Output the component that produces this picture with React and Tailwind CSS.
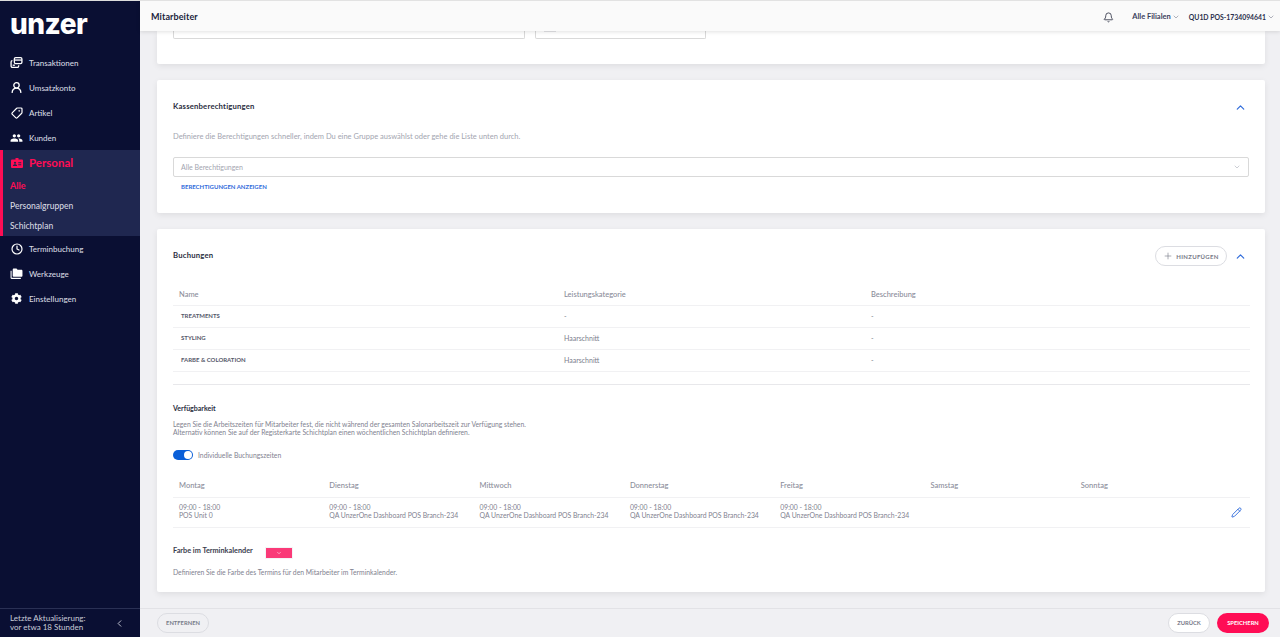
import { Bell, ChevronDown, ChevronLeft, ChevronUp, Clock, Pencil, Plus, Tag, UserRound } from "lucide-react";
import { MdFolderCopy, MdPeople } from "react-icons/md";
import { FaCog } from "react-icons/fa";

const TransactionsIcon = () => (
  <svg viewBox="0 0 24 24" className="w-[13px] h-[13px]" fill="none" stroke="currentColor" strokeWidth="2.4">
    <rect x="8" y="3" width="14" height="11" rx="2.5" />
    <path d="M8 7.5h14" />
    <path d="M4.5 8.5A2.5 2.5 0 0 0 2 11v7.5A2.5 2.5 0 0 0 4.5 21h9a2.5 2.5 0 0 0 2.5-2.5V17" />
    <path d="M5 17h4" />
  </svg>
);

// filled staff badge with clip on top
const BadgeIcon = () => (
  <svg viewBox="0 0 24 20" className="w-[12px] h-[10px]" fill="currentColor">
    <path d="M9 0h6v3h7a2 2 0 0 1 2 2v13a2 2 0 0 1-2 2H2a2 2 0 0 1-2-2V5a2 2 0 0 1 2-2h7z" />
    <circle cx="8" cy="9.5" r="2.2" fill="#1f2750" />
    <path d="M3.8 16c0-2.2 1.9-3.4 4.2-3.4s4.2 1.2 4.2 3.4z" fill="#1f2750" />
    <path d="M14.5 8.5h6v1.8h-6zM14.5 12.5h6v1.8h-6z" fill="#1f2750" />
  </svg>
);

const NavItem = ({ icon, label }) => (
  <div className="h-[25px] flex items-center pl-[10px] text-[#d5d7e0] text-[8px] font-medium">
    <span className="w-[13px] flex justify-center mr-[6px] text-white">{icon}</span>
    {label}
  </div>
);

const Sidebar = () => (
  <aside className="w-[140px] shrink-0 bg-[#0a0f33] flex flex-col border-t border-[#dddddd]">
    <div className="h-[49px] pl-[10px] pt-[7px] text-white text-[28px] leading-[32px] font-extrabold tracking-[-0.5px] font-['Inter',sans-serif]">
      unzer
    </div>
    <NavItem icon={<TransactionsIcon />} label="Transaktionen" />
    <NavItem icon={<UserRound size={13} strokeWidth={2.4} />} label="Umsatzkonto" />
    <NavItem icon={<Tag size={12} strokeWidth={2.4} className="rotate-90" />} label="Artikel" />
    <NavItem icon={<MdPeople size={14} />} label="Kunden" />
    <div className="bg-[#1f2750] border-l-[3px] border-[#ff0d55] h-[86px] flex flex-col">
      <div className="h-[26px] flex items-center pl-[7px] text-[#ff0d55] text-[11.5px] font-bold">
        <span className="w-[13px] flex justify-center mr-[6px]"><BadgeIcon /></span>
        Personal
      </div>
      <div className="h-[20px] flex items-center pl-[7px] text-[#ff0d55] text-[9px] font-bold">Alle</div>
      <div className="h-[20px] flex items-center pl-[7px] text-[#d5d7e0] text-[8.5px] font-medium">Personalgruppen</div>
      <div className="h-[20px] flex items-center pl-[7px] text-[#d5d7e0] text-[8.5px] font-medium">Schichtplan</div>
    </div>
    <NavItem icon={<Clock size={12} strokeWidth={2.4} />} label="Terminbuchung" />
    <NavItem icon={<MdFolderCopy size={14} />} label="Werkzeuge" />
    <NavItem icon={<FaCog size={11} />} label="Einstellungen" />
    <div className="mt-auto h-[29px] border-t border-[#2a3054] flex items-center justify-between pl-[10px] pr-[15px] text-[#c9ccd8] text-[8px] leading-[9px]">
      <div>
        Letzte Aktualisierung:
        <br />
        vor etwa 18 Stunden
      </div>
      <ChevronLeft size={11} />
    </div>
  </aside>
);

const Header = () => (
  <header className="relative z-10 h-[31px] shrink-0 bg-[#fafafa] border-t border-[#e2e2e2] shadow-[0_1px_4px_rgba(0,0,0,0.12)] flex items-center pt-[2px] pl-[11px] pr-[5px] text-[#1a1f3d]">
    <div className="text-[9px] font-bold tracking-[0.1px]">Mitarbeiter</div>
    <Bell size={11} className="ml-auto text-[#3d4152]" />
    <div className="ml-[18px] text-[7.5px] font-bold text-[#3a3f5c]">Alle Filialen</div>
    <ChevronDown size={8} className="ml-[1px] text-[#8a8d9c]" />
    <div className="ml-[9px] text-[6.85px] font-bold text-[#2a2f4c]">QU1D POS-1734094641</div>
    <ChevronDown size={8} className="ml-[1px] text-[#8a8d9c]" />
  </header>
);

const BookingRow = ({ name, category }) => (
  <div className="h-[22px] grid grid-cols-[383px_307px_1fr] items-center border-b border-[#f1f1f3] pl-[8px]">
    <div className="mb-[2px] text-[6px] font-bold text-[#55586a]">{name}</div>
    <div className="text-[7px] text-[#7a7d8c]">{category}</div>
    <div className="text-[7px] text-[#7a7d8c]">-</div>
  </div>
);

const days = ["Montag", "Dienstag", "Mittwoch", "Donnerstag", "Freitag", "Samstag", "Sonntag"];
const branch = "QA UnzerOne Dashboard POS Branch-234";

const Main = () => (
  <main className="flex-1 min-h-0 overflow-hidden bg-[#f0f0f3] pl-[17px] pr-[15px]">
    <section className="h-[33px] bg-white rounded-b-[2px] shadow-[0_2px_6px_rgba(0,0,0,0.08)] px-[16px]">
      <div className="flex gap-[10px]">
        <div className="w-[352px] h-[8px] border border-t-0 border-[#d9d9d9] rounded-b-[2px]" />
        <div className="w-[171px] h-[8px] border border-t-0 border-[#d9d9d9] rounded-b-[2px] pl-[8px]">
          <div className="w-[12px] h-[1px] bg-[#e2e2e6]" />
        </div>
      </div>
    </section>

    <section className="mt-[16px] h-[133px] bg-white rounded-[2px] shadow-[0_2px_6px_rgba(0,0,0,0.08)] px-[16px] pt-[21px]">
      <div className="flex items-center justify-between h-[12px]">
        <h2 className="text-[7.7px] font-bold tracking-[0.2px] text-[#2a2d3e]">Kassenberechtigungen</h2>
        <ChevronUp size={13} strokeWidth={2.2} className="text-[#2f6bdb] mr-[2px]" />
      </div>
      <p className="mt-[19px] text-[7.5px] leading-[10px] text-[#a3a5b0]">
        Definiere die Berechtigungen schneller, indem Du eine Gruppe auswählst oder gehe die Liste unten durch.
      </p>
      <div className="mt-[15px] h-[20px] w-[1076px] border border-[#d9d9d9] rounded-[2px] flex items-center justify-between pl-[7px] pr-[7px]">
        <span className="text-[7px] text-[#a3a5b0]">Alle Berechtigungen</span>
        <ChevronDown size={8} className="text-[#b4b6bf]" />
      </div>
      <div className="mt-[6px] ml-[8px] text-[6px] leading-[8px] font-bold text-[#2f6bdb]">BERECHTIGUNGEN ANZEIGEN</div>
    </section>

    <section className="mt-[16px] h-[363px] bg-white rounded-[2px] shadow-[0_2px_6px_rgba(0,0,0,0.08)] px-[16px] pt-[17px]">
      <div className="flex items-center h-[20px]">
        <h2 className="text-[7.7px] font-bold tracking-[0.2px] text-[#2a2d3e]">Buchungen</h2>
        <button className="ml-auto h-[20px] w-[72px] border border-[#dcdde2] rounded-full flex items-center justify-center gap-[3px] text-[6px] font-bold tracking-[0.3px] text-[#777a88]">
          <Plus size={10} strokeWidth={1.5} />
          HINZUFÜGEN
        </button>
        <ChevronUp size={13} strokeWidth={2.2} className="ml-[7px] mr-[2px] text-[#2f6bdb]" />
      </div>

      <div className="mt-[18px] w-[1077px]">
        <div className="h-[22px] grid grid-cols-[385px_307px_1fr] items-center border-b border-[#f1f1f3] pl-[6px] text-[7.5px] font-medium text-[#8b8d9a]">
          <div>Name</div>
          <div>Leistungskategorie</div>
          <div>Beschreibung</div>
        </div>
        <BookingRow name="TREATMENTS" category="-" />
        <BookingRow name="STYLING" category="Haarschnitt" />
        <BookingRow name="FARBE & COLORATION" category="Haarschnitt" />
      </div>

      <div className="mt-[12px] w-[1077px] border-t border-[#e8e8eb]" />

      <h3 className="mt-[19px] text-[7px] leading-[9px] font-bold text-[#2a2d3e]">Verfügbarkeit</h3>
      <p className="mt-[7px] text-[6.8px] leading-[8px] text-[#7f8290]">
        Legen Sie die Arbeitszeiten für Mitarbeiter fest, die nicht während der gesamten Salonarbeitszeit zur Verfügung stehen.
        <br />
        Alternativ können Sie auf der Registerkarte Schichtplan einen wöchentlichen Schichtplan definieren.
      </p>

      <div className="mt-[14px] flex items-center h-[10px]">
        <div className="w-[20px] h-[10px] rounded-full bg-[#0a5fd8] flex justify-end items-center pr-[1px]">
          <div className="w-[8px] h-[8px] rounded-full bg-white" />
        </div>
        <span className="ml-[5px] text-[6.8px] text-[#7f8290]">Individuelle Buchungszeiten</span>
      </div>

      <div className="mt-[14px] w-[1077px]">
        <div className="h-[24px] grid grid-cols-[repeat(7,150.3px)_1fr] items-center border-b border-[#f1f1f3] pl-[6px] text-[7.5px] font-medium text-[#8b8d9a]">
          {days.map((d) => (
            <div key={d}>{d}</div>
          ))}
        </div>
        <div className="h-[30px] pb-[4px] grid grid-cols-[repeat(7,150.3px)_1fr] items-center border-b border-[#f1f1f3] pl-[6px] text-[6.85px] leading-[8px] text-[#7f8290] relative">
          <div>09:00 - 18:00<br />POS Unit 0</div>
          <div>09:00 - 18:00<br />{branch}</div>
          <div>09:00 - 18:00<br />{branch}</div>
          <div>09:00 - 18:00<br />{branch}</div>
          <div>09:00 - 18:00<br />{branch}</div>
          <div />
          <div />
          <Pencil size={11} strokeWidth={2} className="absolute right-[8px] top-[9px] text-[#2f6bdb]" />
        </div>
      </div>

      <div className="mt-[18px] flex items-start h-[13px]">
        <span className="text-[7.3px] leading-[9px] font-bold text-[#3a3d4e] w-[93px]">Farbe im Terminkalender</span>
        <div className="w-[26px] h-[10px] mt-[2px] bg-[#fa3a78] outline outline-[#f4f4f6] flex items-center justify-center text-white">
          <ChevronDown size={6} />
        </div>
      </div>
      <p className="mt-[9px] text-[6.8px] leading-[9px] text-[#7f8290]">
        Definieren Sie die Farbe des Termins für den Mitarbeiter im Terminkalender.
      </p>
    </section>
  </main>
);

const Footer = () => (
  <footer className="h-[29px] shrink-0 bg-[#f0f0f3] border-t border-[#e2e2e6] flex items-center pl-[17px] pr-[11px]">
    <button className="h-[20px] w-[52px] rounded-full border border-[#dcdde2] text-[5.8px] font-bold text-[#777a88]">ENTFERNEN</button>
    <button className="ml-auto h-[20px] w-[42px] rounded-full border border-[#dcdde2] bg-white text-[5.8px] font-bold text-[#777a88]">ZURÜCK</button>
    <button className="ml-[7px] h-[20px] w-[52px] rounded-full bg-[#ff0d55] text-[5.8px] font-bold text-white">SPEICHERN</button>
  </footer>
);

export default function App() {
  return (
    <div className="w-[1280px] h-[637px] flex overflow-hidden font-['Lato',sans-serif]">
      <Sidebar />
      <div className="flex-1 min-w-0 flex flex-col">
        <Header />
        <Main />
        <Footer />
      </div>
    </div>
  );
}
